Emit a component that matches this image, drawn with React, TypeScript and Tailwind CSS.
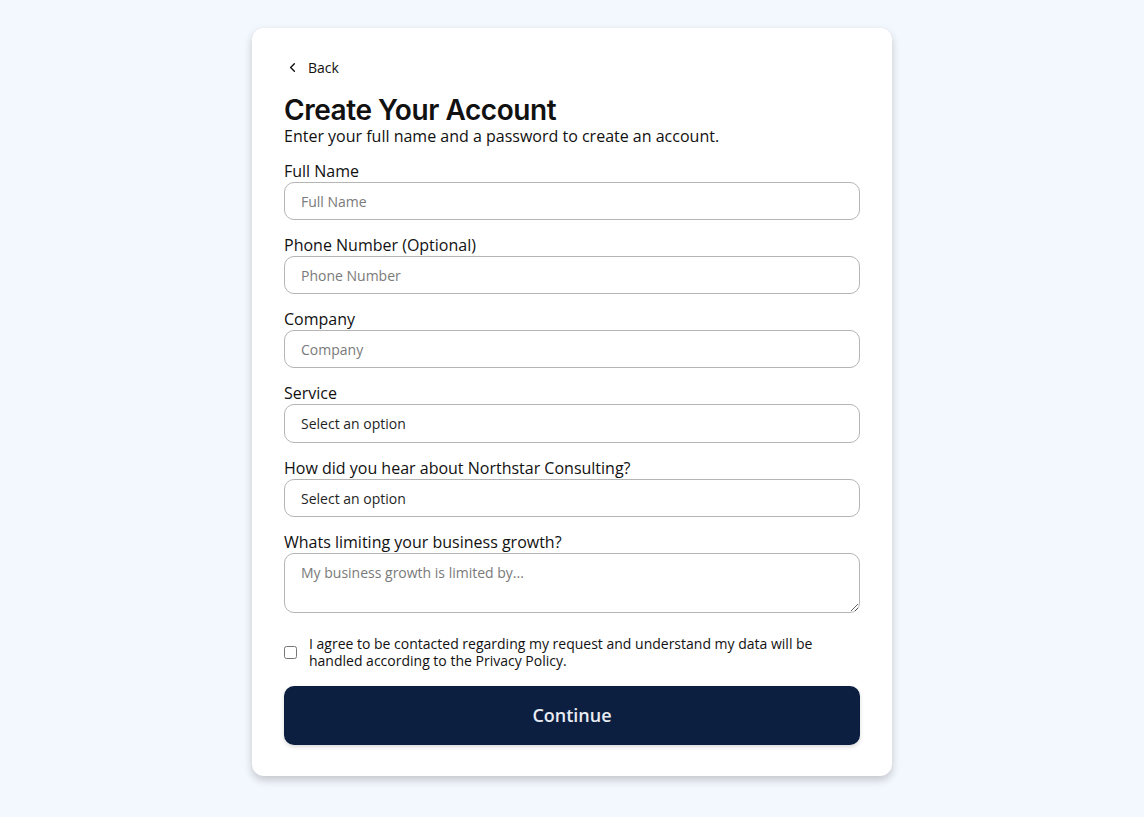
import { ChevronLeft } from 'lucide-react';

const inputClass =
  "w-full h-[38px] rounded-[10px] border border-[#b5b5b5] bg-white px-4 text-[14px] text-[#1f1f1f] placeholder:text-[#7a7a7a] outline-none";

function Field({ label, children }: { label: string; children: React.ReactNode }) {
  return (
    <div className="flex flex-col">
      <label className="text-[16px] leading-[22px] text-[#111]">{label}</label>
      {children}
    </div>
  );
}

export default function App() {
  return (
    <div
      className="min-h-[817px] bg-[#f3f8fe] flex justify-center pt-[28px]"
      style={{ fontFamily: '"Open Sans", "Liberation Sans", sans-serif' }}
    >
      <div className="w-[640px] h-[748px] bg-white rounded-xl shadow-[0_4px_8px_rgba(0,0,0,0.2)] px-8 pt-[29px]">
        {/* Back link */}
        <button className="flex items-center gap-[8px] h-5 text-[14px] text-[#111] pl-[1px]">
          <ChevronLeft className="w-[15px] h-[15px]" strokeWidth={2.2} />
          Back
        </button>

        <h1
          className="mt-[19px] text-[28px] leading-[28px] font-semibold text-[#111] tracking-[-0.45px]"
          style={{ fontFamily: 'Inter, "Liberation Sans", sans-serif' }}
        >
          Create Your Account
        </h1>
        <p className="text-[16px] leading-[24px] text-[#111]">
          Enter your full name and a password to create an account.
        </p>

        <form className="mt-3 flex flex-col gap-[14px]">
          <Field label="Full Name">
            <input className={inputClass} placeholder="Full Name" />
          </Field>
          <Field label="Phone Number (Optional)">
            <input className={inputClass} placeholder="Phone Number" />
          </Field>
          <Field label="Company">
            <input className={inputClass} placeholder="Company" />
          </Field>
          <Field label="Service">
            <select className={inputClass + " appearance-none h-[39px]"} defaultValue="">
              <option value="">Select an option</option>
            </select>
          </Field>
          <Field label="How did you hear about Northstar Consulting?">
            <select className={inputClass + " appearance-none"} defaultValue="">
              <option value="">Select an option</option>
            </select>
          </Field>
          <Field label="Whats limiting your business growth?">
            <textarea
              className="w-full h-[60px] rounded-[10px] border border-[#b5b5b5] bg-white px-4 py-[9px] text-[14px] leading-[20px] text-[#1f1f1f] placeholder:text-[#7a7a7a] outline-none"
              placeholder="My business growth is limited by..."
            />
          </Field>
        </form>

        <div className="mt-[22px] flex items-center gap-3">
          <input type="checkbox" className="w-[13px] h-[13px] shrink-0" />
          <span className="text-[14px] leading-[17px] text-[#111]">
            I agree to be contacted regarding my request and understand my data will be handled according to the Privacy Policy.
          </span>
        </div>

        <button className="mt-[17px] w-full h-[59px] rounded-[10px] bg-[#0c1f40] text-[#e8ecf3] text-[18px] font-semibold shadow-[0_2px_4px_rgba(0,0,0,0.15)]">
          Continue
        </button>
      </div>
    </div>
  );
}
